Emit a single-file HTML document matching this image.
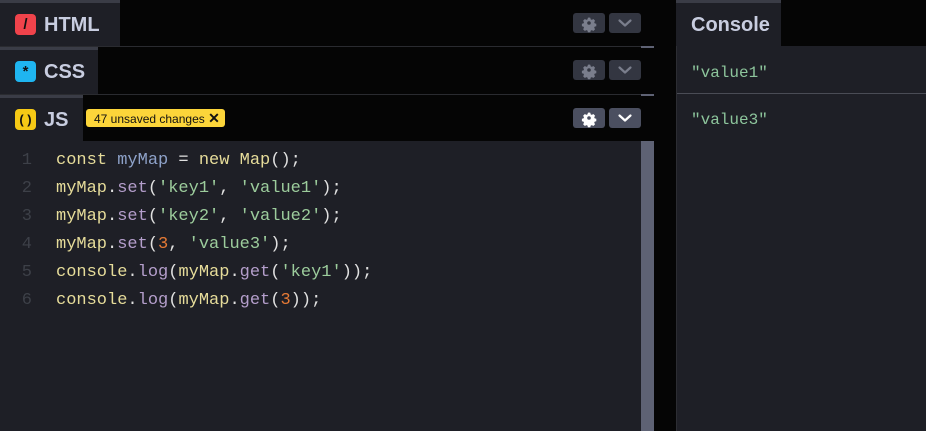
<!DOCTYPE html>
<html><head><style>
*{margin:0;padding:0;box-sizing:border-box}
body{width:926px;height:431px;background:#050505;position:relative;overflow:hidden;font-family:"Liberation Sans",sans-serif}
.tab{position:absolute;left:0;background:#1e1f26;border-top:3px solid #3a3c46;color:#c8cde0;font-weight:bold;font-size:20px}
.tab span.t{position:absolute;left:44px;top:11px}
.ic{position:absolute;left:15px;top:11px;width:21px;height:21px;border-radius:4px;color:#111;font-size:15px;text-align:center;line-height:21px;font-weight:bold}
.btn{position:absolute;width:32px;height:20px;border-radius:3px;background:#333641}
.btn.a{background:#4b4f60}
.btn svg{position:absolute;left:0;top:0}
.hl{position:absolute;left:0;width:641px;height:1px;background:#2a2b30}
.code{position:absolute;left:0;top:141px;width:641px;height:290px;background:#1e1f26;font-family:"Liberation Mono",monospace;font-size:17px}
.ln{position:absolute;left:0;width:32px;text-align:right;color:#3d4048}
.cl{position:absolute;left:56px;color:#e0e0e0;white-space:pre}
.k{color:#e6dc9a}.v{color:#8ea2c9}.f{color:#b49ecb}.s{color:#9ccc9c}.n{color:#e67a35}.y{color:#e6dc9a}
.con{position:absolute;left:676px;top:46px;width:250px;height:385px;background:#1e1f26;border-left:1px solid #2c2d33}
.cs{position:absolute;left:14px;font-family:"Liberation Mono",monospace;font-size:16px;color:#8dc59c}
</style></head><body>
<svg width="0" height="0" style="position:absolute"><defs>
<g id="gear"><path d="M16 4.5l1.3.3.4 1.6 1.2.5 1.4-.9 1.8 1.8-.9 1.4.5 1.2 1.6.4v2.4l-1.6.4-.5 1.2.9 1.4-1.8 1.8-1.4-.9-1.2.5-.4 1.6h-2.4l-.4-1.6-1.2-.5-1.4.9-1.8-1.8.9-1.4-.5-1.2-1.6-.4v-2.4l1.6-.4.5-1.2-.9-1.4 1.8-1.8 1.4.9 1.2-.5.4-1.6z M16 8.2a1.8 1.8 0 1 0 0 3.6a1.8 1.8 0 1 0 0-3.6z" fill-rule="evenodd"/></g>
<g id="chev"><path d="M10.5 7.5l5.5 5 5.5-5" fill="none" stroke-width="2.2" stroke-linecap="round" stroke-linejoin="round"/></g>
</defs></svg>
<div class="tab" style="top:0;width:120px;height:46px"><div class="ic" style="background:#f0434b;">/</div><span class="t">HTML</span></div>
<div class="hl" style="top:46px"></div>
<div class="tab" style="top:47px;width:98px;height:47px"><div class="ic" style="background:#1fb5f0;">*</div><span class="t">CSS</span></div>
<div class="hl" style="top:94px"></div>
<div class="tab" style="top:95px;width:83px;height:46px"><div class="ic" style="background:#f6c915;font-size:13px">( )</div><span class="t">JS</span></div>
<div style="position:absolute;left:86px;top:109px;width:139px;height:18px;background:#fcd53a;border-radius:3px;font-size:12px;color:#111;line-height:18px;padding-left:8px">47 unsaved changes <b style="font-size:14px">✕</b></div>
<div style="position:absolute;left:641px;top:46px;width:13px;height:2px;background:#5e6274"></div>
<div style="position:absolute;left:641px;top:94px;width:13px;height:2px;background:#5e6274"></div>
<div class="btn" style="left:573px;top:13px"><svg width="32" height="20" fill="#7a7e8c"><use href="#gear"/></svg></div>
<div class="btn" style="left:609px;top:13px"><svg width="32" height="20" stroke="#7a7e8c"><use href="#chev"/></svg></div>
<div class="btn" style="left:573px;top:60px"><svg width="32" height="20" fill="#7a7e8c"><use href="#gear"/></svg></div>
<div class="btn" style="left:609px;top:60px"><svg width="32" height="20" stroke="#7a7e8c"><use href="#chev"/></svg></div>
<div class="btn a" style="left:573px;top:108px"><svg width="32" height="20" fill="#fff"><use href="#gear"/></svg></div>
<div class="btn a" style="left:609px;top:108px"><svg width="32" height="20" stroke="#fff"><use href="#chev"/></svg></div>
<div class="code">
<div class="ln" style="top:10px">1</div><div class="cl" style="top:10px"><span class="k">const</span> <span class="v">myMap</span> = <span class="k">new</span> <span class="y">Map</span>();</div>
<div class="ln" style="top:38px">2</div><div class="cl" style="top:38px"><span class="y">myMap</span>.<span class="f">set</span>(<span class="s">'key1'</span>, <span class="s">'value1'</span>);</div>
<div class="ln" style="top:66px">3</div><div class="cl" style="top:66px"><span class="y">myMap</span>.<span class="f">set</span>(<span class="s">'key2'</span>, <span class="s">'value2'</span>);</div>
<div class="ln" style="top:94px">4</div><div class="cl" style="top:94px"><span class="y">myMap</span>.<span class="f">set</span>(<span class="n">3</span>, <span class="s">'value3'</span>);</div>
<div class="ln" style="top:122px">5</div><div class="cl" style="top:122px"><span class="y">console</span>.<span class="f">log</span>(<span class="y">myMap</span>.<span class="f">get</span>(<span class="s">'key1'</span>));</div>
<div class="ln" style="top:150px">6</div><div class="cl" style="top:150px"><span class="y">console</span>.<span class="f">log</span>(<span class="y">myMap</span>.<span class="f">get</span>(<span class="n">3</span>));</div>
</div>
<div style="position:absolute;left:641px;top:141px;width:13px;height:290px;background:#5e6274"></div>
<div class="tab" style="left:676px;top:0;width:105px;height:46px"><span class="t" style="left:15px">Console</span></div>
<div class="con">
<div class="cs" style="top:18px">"value1"</div>
<div style="position:absolute;left:0;top:47px;width:250px;height:1px;background:#4a4c55"></div>
<div class="cs" style="top:65px">"value3"</div>
</div>
</body></html>
